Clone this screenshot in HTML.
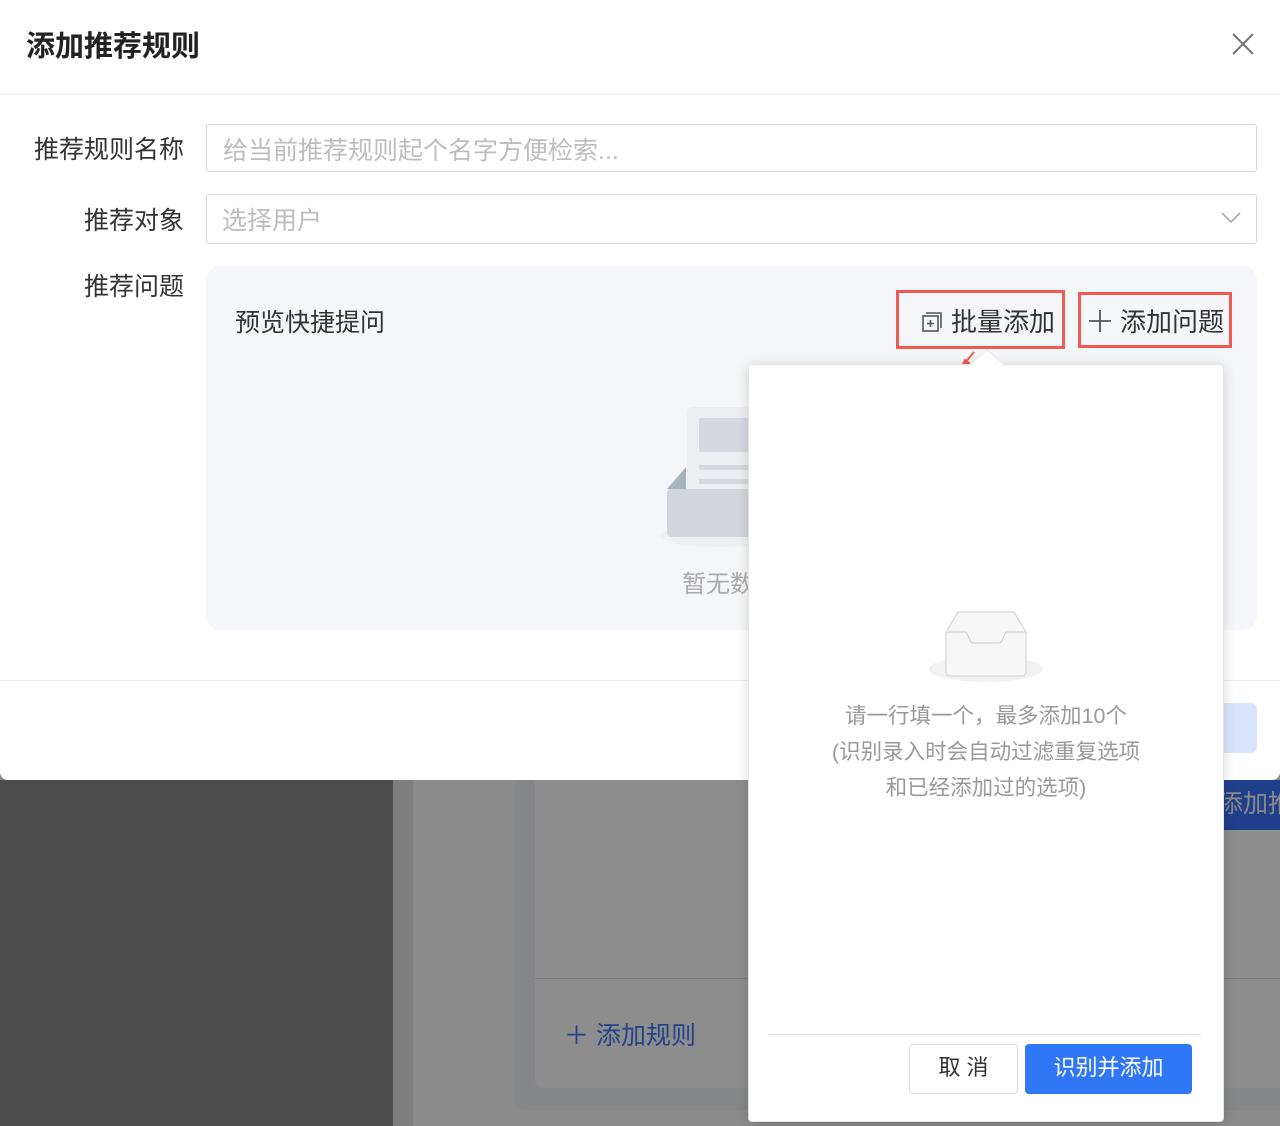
<!DOCTYPE html>
<html><head><meta charset="utf-8"><style>
*{box-sizing:border-box;margin:0;padding:0}
body{width:1280px;height:1126px;position:relative;overflow:hidden;font-family:"Liberation Sans","Noto Sans CJK SC",sans-serif;background:#8a8a8a}
.abs{position:absolute}
</style></head><body>
<div class="abs" style="left:0;top:780px;width:393px;height:346px;background:#4d4d4d"></div>
<div class="abs" style="left:393px;top:780px;width:20px;height:346px;background:#7e7e7e"></div>
<div class="abs" style="left:413px;top:780px;width:867px;height:346px;background:#8b8b8b"></div>
<div class="abs" style="left:514px;top:760px;width:800px;height:350px;background:#858789;border-radius:10px"></div>
<div class="abs" style="left:535px;top:760px;width:760px;height:328px;background:#8d8d8d;border-radius:8px"></div>
<div class="abs" style="left:535px;top:978px;width:745px;height:1px;background:#7a7a7a"></div>
<div class="abs" style="left:564px;top:1016px;font-size:25px;color:#22438a">＋ 添加规则</div>
<div class="abs" style="left:1210px;top:780px;width:80px;height:50px;background:#1f3f8a;border-radius:8px"></div>
<div class="abs" style="left:1218px;top:784px;font-size:25px;color:#8a8a8a;white-space:nowrap">添加推</div>

<div class="abs" style="left:0;top:0;width:1280px;height:780px;background:#fff;border-radius:0 0 8px 8px"></div>
<div class="abs" style="left:26px;top:23px;font-size:29px;color:#222;font-weight:bold">添加推荐规则</div>
<svg class="abs" style="left:1231px;top:32px" width="24" height="24"><path d="M2 2L22 22M22 2L2 22" stroke="#777" stroke-width="2"/></svg>
<div class="abs" style="left:0;top:94px;width:1280px;height:1px;background:#ececec"></div>

<div class="abs" style="left:34px;top:130px;font-size:25px;color:#333">推荐规则名称</div>
<div class="abs" style="left:206px;top:124px;width:1051px;height:48px;border:1px solid #d9d9d9;border-radius:3px"></div>
<div class="abs" style="left:223px;top:131px;font-size:25px;color:#bdbdbd">给当前推荐规则起个名字方便检索...</div>

<div class="abs" style="left:84px;top:201px;font-size:25px;color:#333">推荐对象</div>
<div class="abs" style="left:206px;top:194px;width:1051px;height:50px;border:1px solid #d9d9d9;border-radius:3px"></div>
<div class="abs" style="left:222px;top:201px;font-size:25px;color:#bdbdbd">选择用户</div>
<svg class="abs" style="left:1220px;top:211px" width="22" height="14"><path d="M2 2L11 11L20 2" stroke="#aaa" stroke-width="1.6" fill="none"/></svg>

<div class="abs" style="left:84px;top:267px;font-size:25px;color:#333">推荐问题</div>
<div class="abs" style="left:206px;top:266px;width:1051px;height:364px;background:#f5f6f9;border-radius:14px"></div>
<div class="abs" style="left:235px;top:303px;font-size:25px;color:#333">预览快捷提问</div>

<div class="abs" style="left:896px;top:290px;width:169px;height:59px;border:3px solid #f05a4f"></div>
<svg class="abs" style="left:920px;top:311px" width="22" height="22"><rect x="3" y="5" width="15" height="15" fill="none" stroke="#555" stroke-width="1.6"/><path d="M6 2H21V17" fill="none" stroke="#555" stroke-width="1.6"/><path d="M10.5 9V16M7 12.5H14" stroke="#555" stroke-width="1.6"/></svg>
<div class="abs" style="left:951px;top:302px;font-size:26px;color:#333">批量添加</div>
<div class="abs" style="left:1078px;top:292px;width:154px;height:56px;border:3px solid #f05a4f"></div>
<svg class="abs" style="left:1088px;top:309px" width="24" height="24"><path d="M12 1V23M1 12H23" stroke="#555" stroke-width="1.8"/></svg>
<div class="abs" style="left:1120px;top:302px;font-size:26px;color:#333">添加问题</div>
<svg class="abs" style="left:958px;top:350px" width="20" height="18"><path d="M16 2L6 14M4 16L11 13L7 10Z" stroke="#f05a4f" stroke-width="2" fill="#f05a4f"/></svg>

<div class="abs" style="left:660px;top:525px;width:120px;height:22px;background:#eef0f2;border-radius:50%"></div>
<div class="abs" style="left:687px;top:407px;width:80px;height:115px;background:#eceef2;border-radius:5px"></div>
<div class="abs" style="left:699px;top:418px;width:60px;height:34px;background:#d5d9df;border-radius:2px"></div>
<div class="abs" style="left:699px;top:465px;width:60px;height:5px;background:#d5d9df"></div>
<div class="abs" style="left:699px;top:479px;width:60px;height:5px;background:#d5d9df"></div>
<div class="abs" style="left:667px;top:489px;width:90px;height:48px;background:#d3d6dc;border-radius:4px"></div>
<svg class="abs" style="left:667px;top:465px" width="20" height="25"><path d="M0 24L19 2V24Z" fill="#a9b3bd"/></svg>
<div class="abs" style="left:682px;top:564px;font-size:24px;color:#aaa">暂无数据</div>

<div class="abs" style="left:0;top:680px;width:1280px;height:1px;background:#ececec"></div>
<div class="abs" style="left:1160px;top:703px;width:97px;height:50px;background:#d8e4fb;border-radius:6px"></div>

<svg class="abs" style="left:968px;top:349px;z-index:3" width="40" height="18"><path d="M0 17L19 1L38 17" fill="#fff" stroke="#e6e6e6"/></svg>
<div class="abs" style="left:748px;top:364px;width:476px;height:758px;background:#fff;border:1px solid #e3e3e3;border-radius:4px;box-shadow:0 2px 12px rgba(0,0,0,.15);z-index:2"></div>
<div class="abs" style="z-index:4;left:929px;top:656px;width:114px;height:26px;background:#f2f2f2;border-radius:50%"></div>
<svg class="abs" style="z-index:5;left:942px;top:610px" width="88" height="68"><path d="M4 22L16 2H72L84 22V62Q84 66 80 66H8Q4 66 4 62Z" fill="#f7f7f7" stroke="#d6d6d6" stroke-width="1.3"/><path d="M4 22H24L28 30Q29 33 32 33H56Q59 33 60 30L64 22H84" fill="none" stroke="#d6d6d6" stroke-width="1.3"/></svg>
<div class="abs" style="z-index:5;left:748px;top:698px;width:476px;text-align:center;font-size:21.5px;color:#999;line-height:36px">请一行填一个，最多添加10个<br>(识别录入时会自动过滤重复选项<br>和已经添加过的选项)</div>
<div class="abs" style="z-index:5;left:768px;top:1034px;width:433px;height:1px;background:#e5e5e5"></div>
<div class="abs" style="z-index:5;left:909px;top:1044px;width:109px;height:50px;border:1px solid #dcdcdc;border-radius:4px;text-align:center;line-height:46px;font-size:22px;color:#333">取 消</div>
<div class="abs" style="z-index:5;left:1025px;top:1044px;width:167px;height:50px;background:#2f77f6;border-radius:4px;text-align:center;line-height:48px;font-size:22px;color:#fff">识别并添加</div>
</body></html>
